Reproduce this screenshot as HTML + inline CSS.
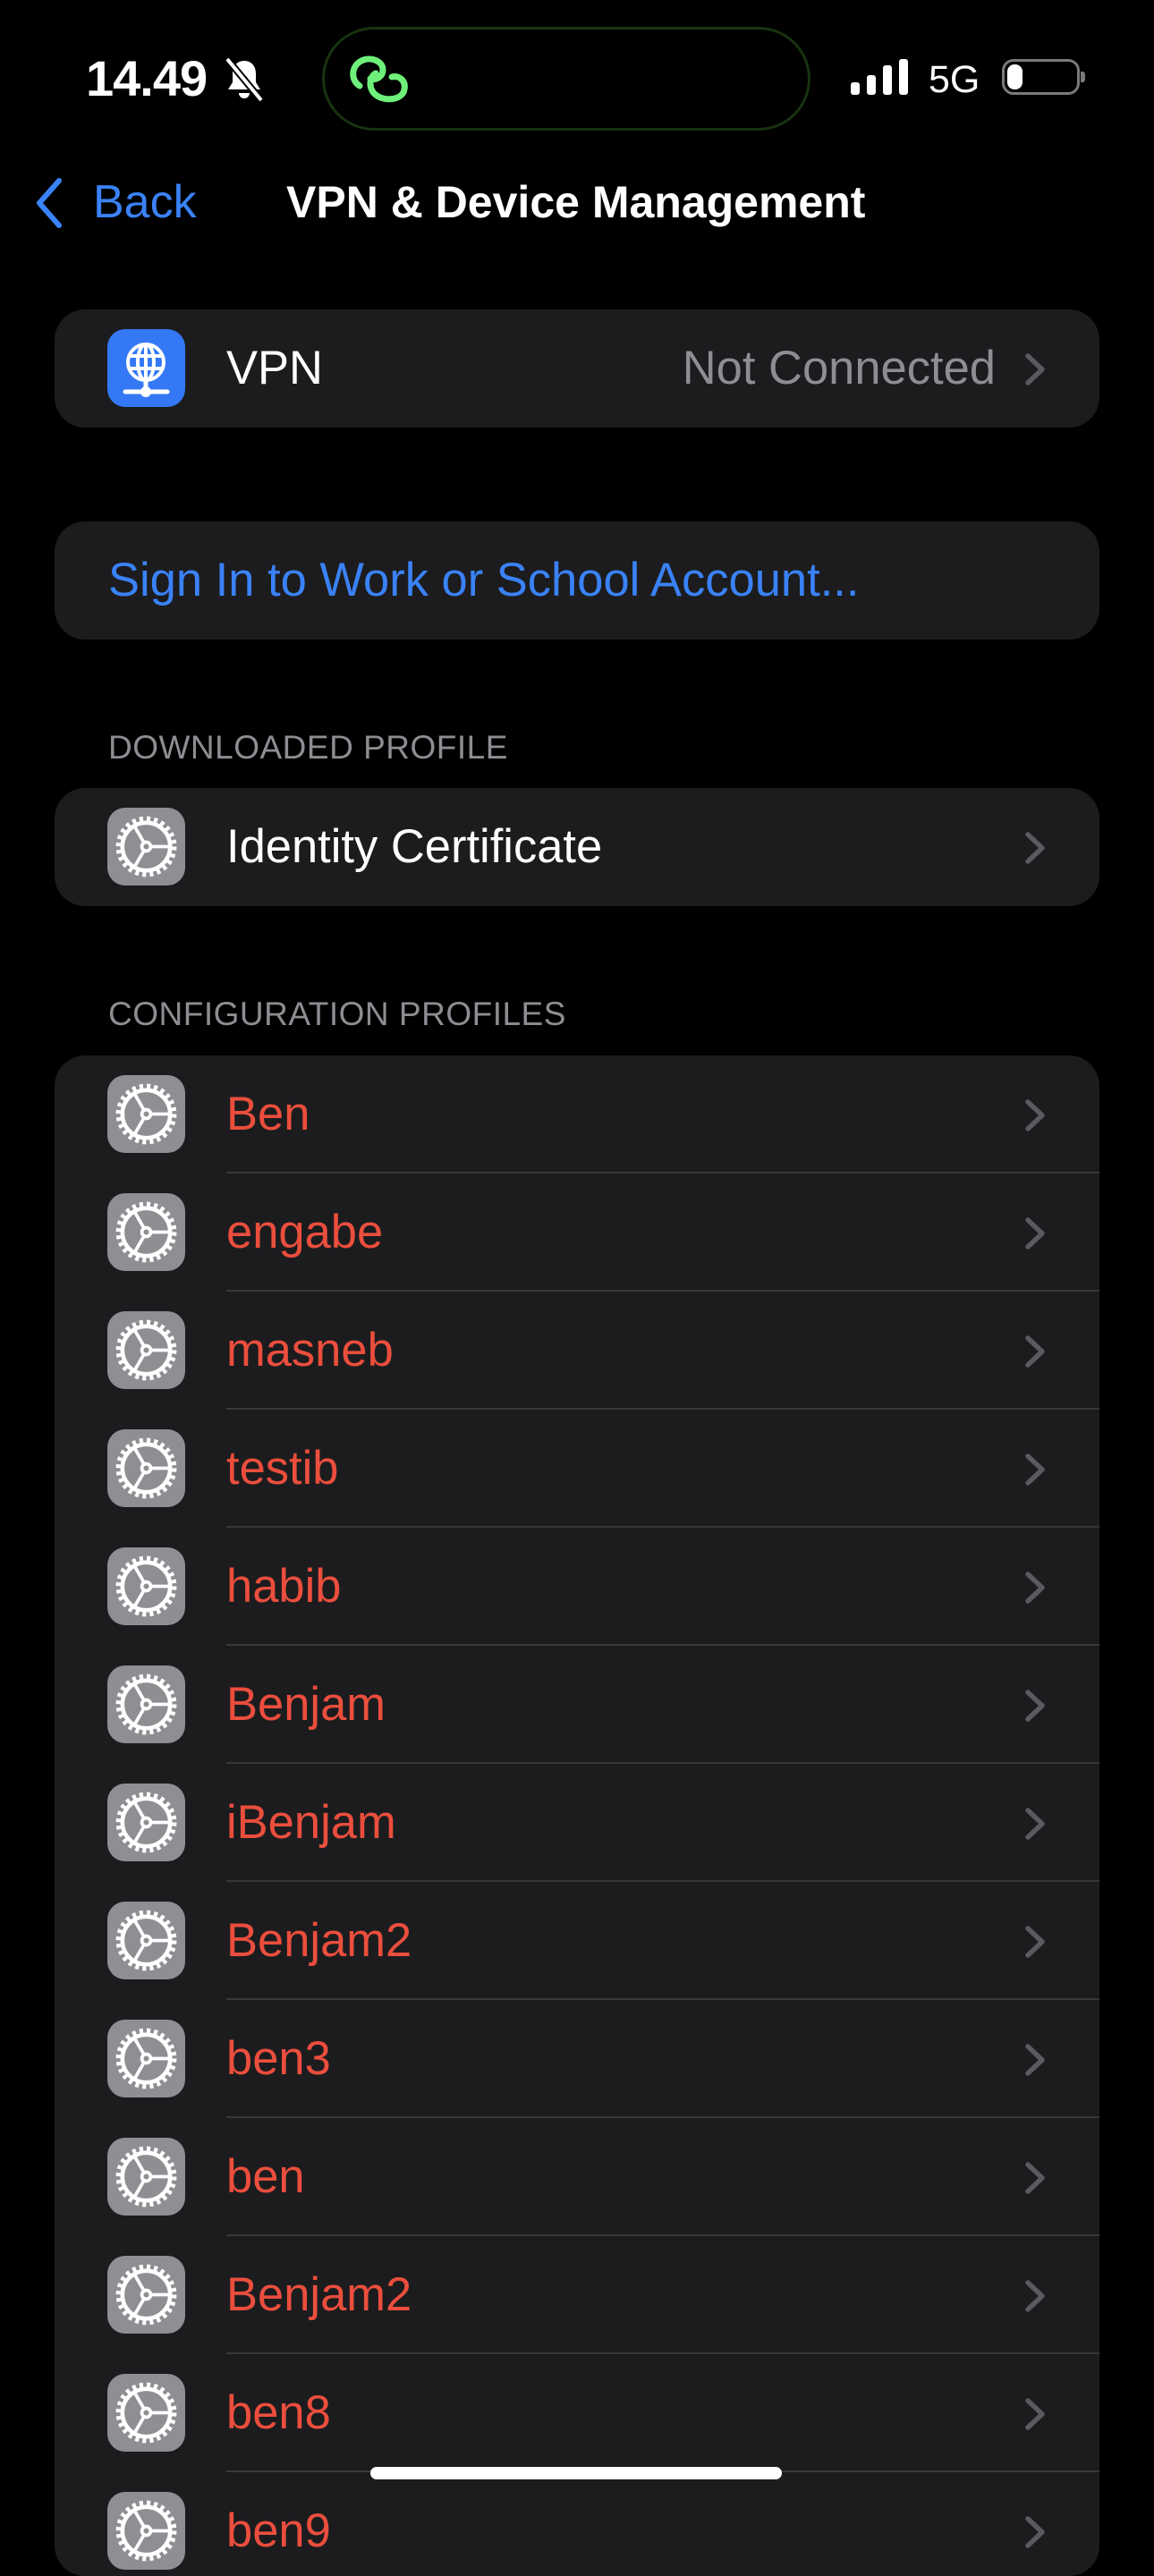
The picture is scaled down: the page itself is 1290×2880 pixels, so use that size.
<!DOCTYPE html>
<html><head><meta charset="utf-8"><style>
*{margin:0;padding:0;box-sizing:border-box}
body{width:1290px;height:2796px;background:#000;position:relative;overflow:hidden;font-family:"Liberation Sans",sans-serif;color:#fff}
.a{position:absolute}
.card{position:absolute;left:61px;width:1168px;background:#1c1c1e;border-radius:34px;overflow:hidden}
.row{position:relative;height:132px}
.row .ic{position:absolute;left:59px;top:22px;width:87px;height:87px;border-radius:20px;background:#8e8e93}
.row .t{position:absolute;left:192px;top:0;line-height:132px;font-size:52.5px}
.row .ch{position:absolute;left:1084px;top:48px}
.row .sep{position:absolute;left:192px;right:0;bottom:0;height:2px;background:#38383a}
.red{color:#eb4e3d}
.hdr{position:absolute;left:121px;font-size:37px;color:#8d8d93;letter-spacing:0.5px}
</style></head><body>
<!-- status bar -->
<div class="a" style="left:96px;top:56px;font-size:56px;font-weight:bold;letter-spacing:-1px;line-height:64px">14.49</div>
<svg class="a" style="left:250px;top:64px" width="46" height="50" viewBox="0 0 46 50"><path d="M23 4c-8 0-13 6-13 14v10l-5 8h36l-5-8V18c0-8-5-14-13-14z" fill="#fff"/><path d="M17 40a6 6 0 0 0 12 0z" fill="#fff"/><path d="M4 2 L42 48" stroke="#000" stroke-width="8"/><path d="M4 2 L42 48" stroke="#fff" stroke-width="4"/></svg>
<div class="a" style="left:360px;top:30px;width:546px;height:116px;border-radius:58px;border:3px solid #17330f;background:#000"></div>
<svg class="a" style="left:388px;top:60px" width="72" height="60" viewBox="0 0 72 60"><g fill="none" stroke="#6ef07a" stroke-width="7" stroke-linecap="round"><path d="M14 36 C4 30 4 14 16 8 C26 3 40 8 40 18 C40 26 32 30 26 28"/><path d="M32 22 C24 26 24 40 32 46 C42 54 62 52 64 40 C66 30 58 24 50 26"/></g></svg>
<svg class="a" style="left:950px;top:64px" width="70" height="44"><rect x="1" y="28" width="10" height="14" rx="3" fill="#fff"/><rect x="19" y="20" width="10" height="22" rx="3" fill="#fff"/><rect x="37" y="9" width="10" height="33" rx="3" fill="#fff"/><rect x="55" y="2" width="10" height="40" rx="3" fill="#fff"/></svg>
<div class="a" style="left:1038px;top:64px;font-size:43px;line-height:50px">5G</div>
<div class="a" style="left:1120px;top:66px;width:87px;height:40px;border:3px solid #7a7a7c;border-radius:13px"></div>
<div class="a" style="left:1126px;top:72px;width:17px;height:28px;background:#fff;border-radius:8px"></div>
<div class="a" style="left:1208px;top:80px;width:5px;height:12px;background:#7a7a7c;border-radius:0 3px 3px 0"></div>
<!-- nav -->
<svg class="a" style="left:36px;top:198px" width="40" height="58" viewBox="0 0 40 58"><path d="M30 4 L8 29 L30 54" fill="none" stroke="#3a82f7" stroke-width="6" stroke-linecap="round" stroke-linejoin="round"/></svg>
<div class="a" style="left:104px;top:196px;font-size:52px;line-height:60px;color:#3a82f7">Back</div>
<div class="a" style="left:320px;top:196px;font-size:50px;line-height:60px;font-weight:bold">VPN &amp; Device Management</div>
<!-- VPN -->
<div class="card" style="top:346px">
<div class="row"><div class="ic" style="background:#3478f6"><svg width="87" height="87" viewBox="0 0 87 87"><g fill="none" stroke="#fff" stroke-width="4"><circle cx="43" cy="37" r="20"/><ellipse cx="43" cy="37" rx="9" ry="20"/><path d="M24 30h38M24 44h38M43 17v40"/><path d="M43 57v12M20 70h47" stroke-linecap="round" stroke-width="5"/></g><circle cx="43" cy="70" r="6" fill="#fff"/></svg></div><div class="t">VPN</div><div class="t" style="left:auto;right:116px;color:#8d8d93">Not Connected</div><svg class="ch" width="26" height="38"><path d="M4 4 L20 19 L4 34" fill="none" stroke="#5b5b5f" stroke-width="5.5" stroke-linecap="round" stroke-linejoin="round"/></svg></div>
</div>
<div class="card" style="top:583px"><div class="row"><div class="t" style="left:60px;color:#3a82f7">Sign In to Work or School Account...</div></div></div>
<div class="hdr" style="top:815px">DOWNLOADED PROFILE</div>
<div class="card" style="top:881px" id="idc"></div>
<div class="hdr" style="top:1113px">CONFIGURATION PROFILES</div>
<div class="card" style="top:1180px;height:1700px" id="cfg"></div>
<div class="a" style="left:414px;top:2758px;width:460px;height:14px;border-radius:7px;background:#fff"></div>
<script>
var gear='<svg width="87" height="87" viewBox="0 0 30 30"><g fill="none" stroke="#fff"><circle cx="15" cy="15" r="10.6" stroke-width="2.2" stroke-dasharray="1.4 1.38"/><circle cx="15" cy="15" r="9.2" stroke-width="1.6"/><circle cx="15" cy="15" r="1.7" stroke-width="1.3"/><path d="M16.7 15H24.2M14.15 16.47L10.4 22.97M14.15 13.53L10.4 7.03" stroke-width="1.3"/></g></svg>';
var ch='<svg class="ch" width="26" height="38"><path d="M4 4 L20 19 L4 34" fill="none" stroke="#5b5b5f" stroke-width="5.5" stroke-linecap="round" stroke-linejoin="round"/></svg>';
function row(n,c,s){return '<div class="row"><div class="ic">'+gear+'</div><div class="t '+c+'">'+n+'</div>'+ch+(s?'<div class="sep"></div>':'')+'</div>';}
document.getElementById('idc').innerHTML=row('Identity Certificate','',false);
var names=['Ben','engabe','masneb','testib','habib','Benjam','iBenjam','Benjam2','ben3','ben','Benjam2','ben8','ben9'];
var h='';names.forEach(function(n,i){h+=row(n,'red',i<names.length-1)});
document.getElementById('cfg').innerHTML=h;
</script>
</body></html>
